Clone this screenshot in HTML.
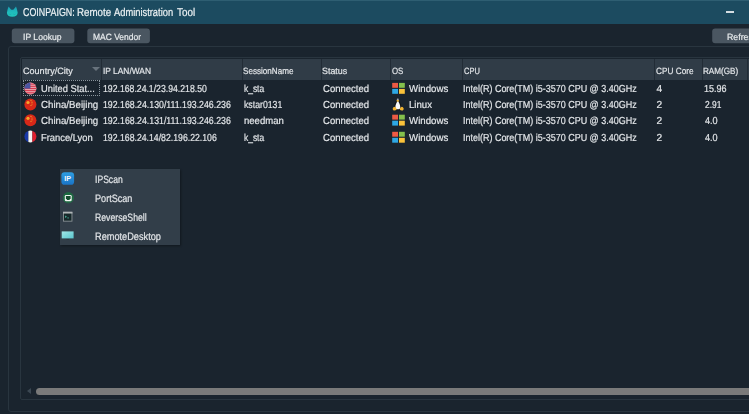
<!DOCTYPE html>
<html><head><meta charset="utf-8"><title>COINPAIGN: Remote Administration Tool</title>
<style>
html,body{margin:0;padding:0;}
body{width:749px;height:414px;overflow:hidden;background:#1a242e;position:relative;font-family:"Liberation Sans",sans-serif;color:#dfe3e6;}
.abs{position:absolute;}
.t{position:absolute;white-space:nowrap;transform-origin:0 50%;text-rendering:geometricPrecision;-webkit-text-stroke:0.2px currentColor;}
#titlebar{left:0;top:0;width:749px;height:24px;background:#1c4b60;}
#titletop{left:0;top:0;width:749px;height:1px;background:#2e5e72;}
#min{left:726px;top:11px;width:8px;height:2px;background:#d4dde2;}
.btn{top:29px;height:15px;background:#4a5661;border-radius:3px;}
#group{left:8px;top:46px;width:760px;height:366px;border:1px solid #29353f;border-radius:3px;box-sizing:border-box;}
#frame{left:20px;top:57px;width:740px;height:343px;border:1px solid #29353f;border-radius:2px;box-sizing:border-box;background:#1a242e;}
#header{left:22px;top:59px;width:728px;height:21px;background:#303c47;}
.sep{top:59px;width:1px;height:21px;background:#222c36;}
#focus{left:23px;top:80px;width:77px;height:16px;border:1px dotted #8a949c;box-sizing:border-box;}
#menu{left:60px;top:169px;width:120px;height:76px;background:#323e49;box-shadow:1px 1px 2px rgba(0,0,0,0.35);}
#thumb{left:36px;top:388px;width:720px;height:7px;background:#7a7a7a;border-radius:3.5px;}
</style></head><body>
<div class="abs" id="titlebar"></div>
<div class="abs" id="titletop"></div>
<svg class="abs" style="left:0;top:0" width="24" height="24" viewBox="0 0 24 24"><defs><linearGradient id="cg" x1="0" y1="0" x2="0" y2="1"><stop offset="0" stop-color="#1a9cb4"/><stop offset="0.55" stop-color="#1fbcbc"/><stop offset="1" stop-color="#20c4ba"/></linearGradient></defs><path d="M8.6 6.4 L11.0 9.6 Q12.3 10.0 13.6 9.6 L16.0 6.4 Q17.2 9 17.7 12.8 Q17.4 16.8 12.3 16.8 Q7.2 16.8 6.9 12.8 Q7.4 9 8.6 6.4 Z" fill="url(#cg)"/><path d="M9.2 14.2 Q10.2 14.8 11.2 14.2 M13.4 14.2 Q14.4 14.8 15.4 14.2" stroke="#18a4aa" stroke-width="0.6" fill="none"/></svg>
<div class="abs" id="min"></div>

<svg class="abs" style="left:0;top:24px" width="749" height="24" viewBox="0 0 749 24">
 <rect x="11.8" y="4.6" width="62.6" height="14.6" rx="3" fill="#4a5661"/>
 <rect x="87.3" y="4.6" width="62.6" height="14.6" rx="3" fill="#4a5661"/>
 <rect x="712.2" y="4.6" width="62.6" height="14.6" rx="3" fill="#4a5661"/>
</svg>

<div class="abs" id="group"></div>
<div class="abs" id="frame"></div>
<div class="abs" id="header"></div>
<div class="abs sep" style="left:101px"></div>
<div class="abs sep" style="left:242px"></div>
<div class="abs sep" style="left:321px"></div>
<div class="abs sep" style="left:390px"></div>
<div class="abs sep" style="left:462px"></div>
<div class="abs sep" style="left:654px"></div>
<div class="abs sep" style="left:702px"></div>
<div class="abs sep" style="left:747px"></div>
<div class="abs" style="left:92px;top:67px;width:0;height:0;border-left:4px solid transparent;border-right:4px solid transparent;border-top:4.5px solid #68737d;"></div>
<div class="abs" id="focus"></div>

<!-- flags -->
<svg class="abs" style="left:24px;top:82px" width="13" height="62" viewBox="0 0 13 62">
 <defs>
  <clipPath id="c1"><circle cx="6.4" cy="6.5" r="6"/></clipPath>
  <clipPath id="c2"><circle cx="6.4" cy="22.4" r="6"/></clipPath>
  <clipPath id="c3"><circle cx="6.4" cy="38.2" r="6"/></clipPath>
  <clipPath id="c4"><circle cx="6.4" cy="54.4" r="6"/></clipPath>
 </defs>
 <g clip-path="url(#c1)"><rect x="0" y="0" width="13" height="13" fill="#f2c8cc"/><rect x="0" y="0.40" width="13" height="1.15" fill="#d83a50"/><rect x="0" y="2.25" width="13" height="1.15" fill="#d83a50"/><rect x="0" y="4.10" width="13" height="1.15" fill="#d83a50"/><rect x="0" y="5.95" width="13" height="1.15" fill="#d83a50"/><rect x="0" y="7.80" width="13" height="1.15" fill="#d83a50"/><rect x="0" y="9.65" width="13" height="1.15" fill="#d83a50"/><rect x="0" y="11.50" width="13" height="1.15" fill="#d83a50"/><rect x="0" y="0" width="6.4" height="6.6" fill="#4a56a4"/></g>
 <g clip-path="url(#c2)">
  <rect x="0" y="16" width="13" height="13" fill="#d82818"/>
  <circle cx="4" cy="20.5" r="1.6" fill="#f4a82c"/>
  <circle cx="7" cy="18.6" r="0.6" fill="#f4a82c"/>
  <circle cx="8" cy="20.2" r="0.6" fill="#f4a82c"/>
  <circle cx="8" cy="22" r="0.6" fill="#f4a82c"/>
  <circle cx="7" cy="23.5" r="0.6" fill="#f4a82c"/>
 </g>
 <g clip-path="url(#c3)">
  <rect x="0" y="32" width="13" height="13" fill="#d82818"/>
  <circle cx="4" cy="36.3" r="1.6" fill="#f4a82c"/>
  <circle cx="7" cy="34.4" r="0.6" fill="#f4a82c"/>
  <circle cx="8" cy="36" r="0.6" fill="#f4a82c"/>
  <circle cx="8" cy="37.8" r="0.6" fill="#f4a82c"/>
  <circle cx="7" cy="39.3" r="0.6" fill="#f4a82c"/>
 </g>
 <g clip-path="url(#c4)">
  <rect x="0" y="48" width="4.4" height="13" fill="#1838a8"/>
  <rect x="4.4" y="48" width="4" height="13" fill="#f4f4f4"/>
  <rect x="8.4" y="48" width="5" height="13" fill="#e02030"/>
 </g>
</svg>

<!-- OS icons -->
<svg class="abs" style="left:392px;top:82px" width="14" height="62" viewBox="0 0 14 62">
 <g id="win">
  <rect x="0.2" y="0.9" width="5.8" height="4.9" fill="#ee5a44"/>
  <rect x="7" y="0.9" width="5.8" height="4.9" fill="#84c04c"/>
  <rect x="0.2" y="6.9" width="5.8" height="4.9" fill="#2ea8e4"/>
  <rect x="7" y="6.9" width="5.8" height="4.9" fill="#fac23a"/>
 </g>
 <g transform="translate(0,31.8)">
  <rect x="0.2" y="0.9" width="5.8" height="4.9" fill="#ee5a44"/>
  <rect x="7" y="0.9" width="5.8" height="4.9" fill="#84c04c"/>
  <rect x="0.2" y="6.9" width="5.8" height="4.9" fill="#2ea8e4"/>
  <rect x="7" y="6.9" width="5.8" height="4.9" fill="#fac23a"/>
 </g>
 <g transform="translate(0,48.9)">
  <rect x="0.2" y="0.9" width="5.8" height="4.9" fill="#ee5a44"/>
  <rect x="7" y="0.9" width="5.8" height="4.9" fill="#84c04c"/>
  <rect x="0.2" y="6.9" width="5.8" height="4.9" fill="#2ea8e4"/>
  <rect x="7" y="6.9" width="5.8" height="4.9" fill="#fac23a"/>
 </g>
</svg>
<svg class="abs" style="left:386px;top:94px" width="24" height="20" viewBox="0 0 24 20">
 <path d="M11.8 4.5 C10.3 4.5 10 5.9 10.1 7 C9.5 8.7 8.2 10.6 8.2 13 L8.8 16.2 L14.8 16.2 L15.4 13 C15.4 10.6 14.1 8.7 13.5 7 C13.6 5.9 13.3 4.5 11.8 4.5 Z" fill="#12161a"/>
 <path d="M11.8 6.8 C10.8 8 9.4 10.6 9.3 13.4 C9.3 16 14.3 16 14.3 13.4 C14.2 10.6 12.8 8 11.8 6.8 Z" fill="#fafafa"/>
 <ellipse cx="11.8" cy="5.3" rx="1.1" ry="0.7" fill="#b8bcc4"/>
 <ellipse cx="11.8" cy="6.8" rx="1.4" ry="0.9" fill="#f2bc40"/>
 <path d="M6.7 14.6 Q7.2 12.6 9 12.9 Q10.4 13.8 10.7 15.4 Q9.6 16.9 7.6 16.4 Q6.5 15.9 6.7 14.6 Z" fill="#f2b430"/>
 <path d="M17.7 14.6 Q17.1 12.6 15.3 12.9 Q13.9 13.8 13.7 15.4 Q14.8 16.9 16.8 16.4 Q17.9 15.9 17.7 14.6 Z" fill="#f2b430"/>
</svg>

<div class="abs" id="menu"></div>
<!-- menu icons -->
<svg class="abs" style="left:56px;top:166px" width="30" height="80" viewBox="0 0 30 80">
 <defs>
  <linearGradient id="gb" x1="0" y1="0" x2="0" y2="1"><stop offset="0" stop-color="#2e9ee2"/><stop offset="1" stop-color="#1a74c6"/></linearGradient>
  <linearGradient id="gc" x1="0" y1="0" x2="1" y2="1"><stop offset="0" stop-color="#a4e6e6"/><stop offset="0.5" stop-color="#7cd6da"/><stop offset="1" stop-color="#5cc6ce"/></linearGradient>
 </defs>
 <rect x="5.4" y="6.2" width="12.7" height="12.6" rx="3.1" fill="url(#gb)"/>
 <text x="11.7" y="15.2" font-family="Liberation Sans, sans-serif" font-weight="bold" font-size="7.2" fill="#f4f8fc" text-anchor="middle">IP</text>
 <circle cx="12.35" cy="31.7" r="5.7" fill="#256f48" opacity="0.7"/>
 <circle cx="12.35" cy="31.7" r="5.1" fill="#1c6a40"/>
 <rect x="8.8" y="28.9" width="6.9" height="6.3" rx="1.3" fill="#eef4f0"/>
 <path d="M9.9 30.1 H14.6 V32.3 L13.4 34 H11.1 L9.9 32.3 Z" fill="#164e30"/>
 <rect x="7" y="45.8" width="9.4" height="9.8" fill="#8a9296"/>
 <rect x="7" y="45.8" width="9.4" height="1.8" fill="#b0b6b8"/>
 <rect x="7.9" y="47.6" width="7.6" height="7.1" fill="#16282a"/>
 <path d="M9.2 49.5 L10.9 50.8 L9.2 52.1 Z" fill="#4cbca4"/>
 <rect x="11.2" y="51.6" width="1.8" height="0.7" fill="#4cbca4"/>
 <rect x="5.7" y="65.4" width="11.9" height="7" fill="url(#gc)"/>
 <rect x="10.4" y="73" width="2.6" height="0.6" fill="#28323a"/>
</svg>

<div class="abs" id="thumb"></div>
<div class="abs" style="left:27px;top:388px;width:0;height:0;border-top:3.5px solid transparent;border-bottom:3.5px solid transparent;border-right:4px solid #3c4853;"></div>

<div id="texts" style="position:absolute;left:0;top:0;width:749px;height:414px;will-change:transform;">
<div class="t" style="left:22.55px;top:4.87px;font-size:11.4px;line-height:16px;color:#eef3f5;transform:scaleX(0.7815)">COINPAIGN:</div>
<div class="t" style="left:77.35px;top:4.87px;font-size:11.4px;line-height:16px;color:#eef3f5;transform:scaleX(0.8561)">Remote</div>
<div class="t" style="left:114.28px;top:4.87px;font-size:11.4px;line-height:16px;color:#eef3f5;transform:scaleX(0.8186)">Administration</div>
<div class="t" style="left:176.94px;top:4.87px;font-size:11.4px;line-height:16px;color:#eef3f5;transform:scaleX(0.8669)">Tool</div>
<div class="t" style="left:23.09px;top:31.17px;font-size:9.0px;line-height:13px;color:#e8ebed;transform:scaleX(0.9545)">IP Lookup</div>
<div class="t" style="left:93.05px;top:31.17px;font-size:9.0px;line-height:13px;color:#e8ebed;transform:scaleX(0.9414)">MAC Vendor</div>
<div class="t" style="left:727.03px;top:31.17px;font-size:9.0px;line-height:13px;color:#e8ebed;transform:scaleX(0.9758)">Refresh</div>
<div class="t" style="left:22.89px;top:64.98px;font-size:9.1px;line-height:13px;color:#e2e5e8;transform:scaleX(0.9962)">Country/City</div>
<div class="t" style="left:102.70px;top:64.98px;font-size:9.1px;line-height:13px;color:#e2e5e8;transform:scaleX(0.9227)">IP LAN/WAN</div>
<div class="t" style="left:243.41px;top:64.98px;font-size:9.1px;line-height:13px;color:#e2e5e8;transform:scaleX(0.8903)">SessionName</div>
<div class="t" style="left:322.35px;top:64.98px;font-size:9.1px;line-height:13px;color:#e2e5e8;transform:scaleX(0.9778)">Status</div>
<div class="t" style="left:391.59px;top:64.98px;font-size:9.1px;line-height:13px;color:#e2e5e8;transform:scaleX(0.8634)">OS</div>
<div class="t" style="left:463.58px;top:64.98px;font-size:9.1px;line-height:13px;color:#e2e5e8;transform:scaleX(0.8265)">CPU</div>
<div class="t" style="left:656.14px;top:64.98px;font-size:9.1px;line-height:13px;color:#e2e5e8;transform:scaleX(0.9057)">CPU Core</div>
<div class="t" style="left:703.38px;top:64.98px;font-size:9.1px;line-height:13px;color:#e2e5e8;transform:scaleX(0.8943)">RAM(GB)</div>
<div class="t" style="left:41.24px;top:83.14px;font-size:10.2px;line-height:14px;color:#e2e5e8;transform:scaleX(0.9132)">United Stat...</div>
<div class="t" style="left:103.07px;top:83.14px;font-size:10.2px;line-height:14px;color:#e2e5e8;transform:scaleX(0.8523)">192.168.24.1/23.94.218.50</div>
<div class="t" style="left:244.17px;top:83.14px;font-size:10.2px;line-height:14px;color:#e2e5e8;transform:scaleX(0.8269)">k_sta</div>
<div class="t" style="left:323.13px;top:83.14px;font-size:10.2px;line-height:14px;color:#e2e5e8;transform:scaleX(0.9351)">Connected</div>
<div class="t" style="left:409.43px;top:83.14px;font-size:10.2px;line-height:14px;color:#e2e5e8;transform:scaleX(0.9492)">Windows</div>
<div class="t" style="left:463.32px;top:83.14px;font-size:10.2px;line-height:14px;color:#e2e5e8;transform:scaleX(0.8806)">Intel(R) Core(TM) i5-3570 CPU @ 3.40GHz</div>
<div class="t" style="left:656.56px;top:83.14px;font-size:10.2px;line-height:14px;color:#e2e5e8;transform:scaleX(1.0000)">4</div>
<div class="t" style="left:703.83px;top:83.14px;font-size:10.2px;line-height:14px;color:#e2e5e8;transform:scaleX(0.8837)">15.96</div>
<div class="t" style="left:41.42px;top:99.44px;font-size:10.2px;line-height:14px;color:#e2e5e8;transform:scaleX(0.9524)">China/Beijing</div>
<div class="t" style="left:103.06px;top:99.44px;font-size:10.2px;line-height:14px;color:#e2e5e8;transform:scaleX(0.8597)">192.168.24.130/111.193.246.236</div>
<div class="t" style="left:244.16px;top:99.44px;font-size:10.2px;line-height:14px;color:#e2e5e8;transform:scaleX(0.8550)">kstar0131</div>
<div class="t" style="left:323.13px;top:99.44px;font-size:10.2px;line-height:14px;color:#e2e5e8;transform:scaleX(0.9351)">Connected</div>
<div class="t" style="left:409.00px;top:99.44px;font-size:10.2px;line-height:14px;color:#e2e5e8;transform:scaleX(0.9430)">Linux</div>
<div class="t" style="left:463.32px;top:99.44px;font-size:10.2px;line-height:14px;color:#e2e5e8;transform:scaleX(0.8806)">Intel(R) Core(TM) i5-3570 CPU @ 3.40GHz</div>
<div class="t" style="left:656.47px;top:99.44px;font-size:10.2px;line-height:14px;color:#e2e5e8;transform:scaleX(1.0000)">2</div>
<div class="t" style="left:704.96px;top:99.44px;font-size:10.2px;line-height:14px;color:#e2e5e8;transform:scaleX(0.8253)">2.91</div>
<div class="t" style="left:41.42px;top:115.24px;font-size:10.2px;line-height:14px;color:#e2e5e8;transform:scaleX(0.9524)">China/Beijing</div>
<div class="t" style="left:103.06px;top:115.24px;font-size:10.2px;line-height:14px;color:#e2e5e8;transform:scaleX(0.8597)">192.168.24.131/111.193.246.236</div>
<div class="t" style="left:244.08px;top:115.24px;font-size:10.2px;line-height:14px;color:#e2e5e8;transform:scaleX(0.9375)">needman</div>
<div class="t" style="left:323.13px;top:115.24px;font-size:10.2px;line-height:14px;color:#e2e5e8;transform:scaleX(0.9351)">Connected</div>
<div class="t" style="left:409.43px;top:115.24px;font-size:10.2px;line-height:14px;color:#e2e5e8;transform:scaleX(0.9492)">Windows</div>
<div class="t" style="left:463.32px;top:115.24px;font-size:10.2px;line-height:14px;color:#e2e5e8;transform:scaleX(0.8806)">Intel(R) Core(TM) i5-3570 CPU @ 3.40GHz</div>
<div class="t" style="left:656.47px;top:115.24px;font-size:10.2px;line-height:14px;color:#e2e5e8;transform:scaleX(1.0000)">2</div>
<div class="t" style="left:704.50px;top:115.24px;font-size:10.2px;line-height:14px;color:#e2e5e8;transform:scaleX(0.8959)">4.0</div>
<div class="t" style="left:41.22px;top:131.84px;font-size:10.2px;line-height:14px;color:#e2e5e8;transform:scaleX(0.9185)">France/Lyon</div>
<div class="t" style="left:103.06px;top:131.84px;font-size:10.2px;line-height:14px;color:#e2e5e8;transform:scaleX(0.8548)">192.168.24.14/82.196.22.106</div>
<div class="t" style="left:244.17px;top:131.84px;font-size:10.2px;line-height:14px;color:#e2e5e8;transform:scaleX(0.8269)">k_sta</div>
<div class="t" style="left:323.13px;top:131.84px;font-size:10.2px;line-height:14px;color:#e2e5e8;transform:scaleX(0.9351)">Connected</div>
<div class="t" style="left:409.43px;top:131.84px;font-size:10.2px;line-height:14px;color:#e2e5e8;transform:scaleX(0.9492)">Windows</div>
<div class="t" style="left:463.32px;top:131.84px;font-size:10.2px;line-height:14px;color:#e2e5e8;transform:scaleX(0.8806)">Intel(R) Core(TM) i5-3570 CPU @ 3.40GHz</div>
<div class="t" style="left:656.47px;top:131.84px;font-size:10.2px;line-height:14px;color:#e2e5e8;transform:scaleX(1.0000)">2</div>
<div class="t" style="left:704.50px;top:131.84px;font-size:10.2px;line-height:14px;color:#e2e5e8;transform:scaleX(0.8959)">4.0</div>
<div class="t" style="left:94.93px;top:173.12px;font-size:10.6px;line-height:15px;color:#e2e5e8;transform:scaleX(0.8119)">IPScan</div>
<div class="t" style="left:94.53px;top:192.12px;font-size:10.6px;line-height:15px;color:#e2e5e8;transform:scaleX(0.8591)">PortScan</div>
<div class="t" style="left:94.61px;top:211.12px;font-size:10.6px;line-height:15px;color:#e2e5e8;transform:scaleX(0.8204)">ReverseShell</div>
<div class="t" style="left:94.55px;top:230.12px;font-size:10.6px;line-height:15px;color:#e2e5e8;transform:scaleX(0.8687)">RemoteDesktop</div>

</div>
</body></html>
